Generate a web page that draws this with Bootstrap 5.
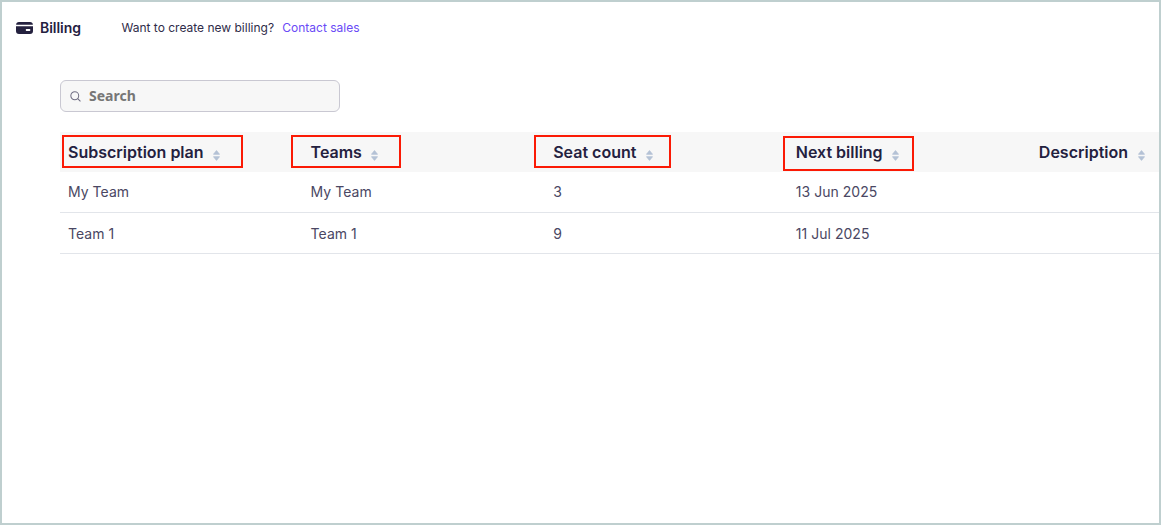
<!DOCTYPE html>
<html lang="en">
<head>
<meta charset="utf-8">
<title>Billing</title>
<link href="https://cdn.jsdelivr.net/npm/bootstrap@5.3.0/dist/css/bootstrap.min.css" rel="stylesheet">
<style>
html,body{height:100%;}
body{font-family:"Inter",sans-serif;color:#24213f;background:#fff;}
.frame{height:525px;border:2px solid #bfcfcf;position:relative;overflow:hidden;}
.topbar{height:51px;padding-left:14px;}
.bill-title{font-size:14px;font-weight:600;color:#24213f;width:82px;letter-spacing:-.05px;gap:7px;}
.topbar-msg{font-size:12px;color:#2f2c49;margin-left:23.5px;padding-top:1px;}
.topbar-msg a{color:#6a4af6;text-decoration:none;margin-left:1.5px;}
.content{padding:27px 0 0 58px;}
.searchbox{width:280px;height:32px;background:#f7f7f7;border:1px solid #c9c8d2;border-radius:6px;padding-left:9px;}
.searchbox input{border:0;background:transparent;outline:0;font-family:"Noto Sans",sans-serif;font-weight:700;font-size:14px;padding:0;width:220px;margin-top:-2px;}
.searchbox input::placeholder{color:#767676;opacity:1;}
.billing-table{margin:20px 0 0;table-layout:fixed;width:100%;}
.billing-table th{background:#f7f7f7;font-size:16px;font-weight:600;color:#24213f;height:40px;padding:0 8px;border:0;vertical-align:middle;white-space:nowrap;box-shadow:none;width:242.6px;}
.billing-table th.col-last{width:auto;padding-right:14.5px;}
.billing-table td{font-size:14px;color:#4a4763;padding:0 8px;height:41px;vertical-align:middle;border-bottom:1px solid #e2e5ea;box-shadow:none;letter-spacing:.03px;}
.billing-table tbody tr:first-child td{height:40px;}
.billing-table tbody tr:last-child td{padding-top:1px;}
.sorter{margin-left:9.5px;vertical-align:-3px;}
.mark-box{position:absolute;border:2px solid #fb1a05;pointer-events:none;}
.mb-a{left:60px;top:133px;width:181px;height:33px;}
.mb-b{left:289px;top:133px;width:110px;height:33px;}
.mb-c{left:532px;top:133px;width:137px;height:33px;}
.mb-d{left:781px;top:134px;width:131px;height:35px;}
</style>
</head>
<body>
<div class="frame">
  <div class="topbar d-flex align-items-center">
    <div class="bill-title d-flex align-items-center">
      <svg width="17" height="12" viewBox="0 0 17 12" aria-hidden="true"><path fill="#24213f" d="M3 0h11a3 3 0 0 1 2.900 2.800H.1A3 3 0 0 1 3 0zM0 4.200h17V9a3 3 0 0 1-3 3H3a3 3 0 0 1-3-3z"/><rect x="9.800" y="7" width="4.500" height="1.900" rx=".6" fill="#fff"/></svg>
      <span>Billing</span>
    </div>
    <div class="topbar-msg">Want to create new billing? &nbsp;<a href="#">Contact sales</a></div>
  </div>
  <div class="content">
    <div class="searchbox d-flex align-items-center gap-2">
      <svg width="11" height="11" viewBox="0 0 12 12" fill="none" stroke="#6f6d82" stroke-width="1.100" aria-hidden="true"><circle cx="5.200" cy="5.200" r="4.300"/><path d="M8.400 8.400l3 3"/></svg>
      <input type="text" placeholder="Search" aria-label="Search">
    </div>
    <table class="table billing-table">
      <thead>
        <tr>
          <th>Subscription plan<svg class="sorter" width="7" height="11" viewBox="0 0 7 11" aria-hidden="true"><path fill="#b4c2d6" stroke="#b4c2d6" stroke-width=".8" stroke-linejoin="round" d="M3.500.6l3 3.700H.5zM3.500 10.400L.5 6.700h6z"/></svg></th>
          <th>Teams<svg class="sorter" width="7" height="11" viewBox="0 0 7 11" aria-hidden="true"><path fill="#b4c2d6" stroke="#b4c2d6" stroke-width=".8" stroke-linejoin="round" d="M3.500.6l3 3.700H.5zM3.500 10.400L.5 6.700h6z"/></svg></th>
          <th>Seat count<svg class="sorter" width="7" height="11" viewBox="0 0 7 11" aria-hidden="true"><path fill="#b4c2d6" stroke="#b4c2d6" stroke-width=".8" stroke-linejoin="round" d="M3.500.6l3 3.700H.5zM3.500 10.400L.5 6.700h6z"/></svg></th>
          <th>Next billing<svg class="sorter" width="7" height="11" viewBox="0 0 7 11" aria-hidden="true"><path fill="#b4c2d6" stroke="#b4c2d6" stroke-width=".8" stroke-linejoin="round" d="M3.500.6l3 3.700H.5zM3.500 10.400L.5 6.700h6z"/></svg></th>
          <th class="col-last text-end">Description<svg class="sorter" width="7" height="11" viewBox="0 0 7 11" aria-hidden="true"><path fill="#b4c2d6" stroke="#b4c2d6" stroke-width=".8" stroke-linejoin="round" d="M3.500.6l3 3.700H.5zM3.500 10.400L.5 6.700h6z"/></svg></th>
        </tr>
      </thead>
      <tbody>
        <tr><td>My Team</td><td>My Team</td><td>3</td><td>13 Jun 2025</td><td></td></tr>
        <tr><td>Team 1</td><td>Team 1</td><td>9</td><td>11 Jul 2025</td><td></td></tr>
      </tbody>
    </table>
  </div>
  <div class="mark-box mb-a"></div>
  <div class="mark-box mb-b"></div>
  <div class="mark-box mb-c"></div>
  <div class="mark-box mb-d"></div>
</div>
</body>
</html>
